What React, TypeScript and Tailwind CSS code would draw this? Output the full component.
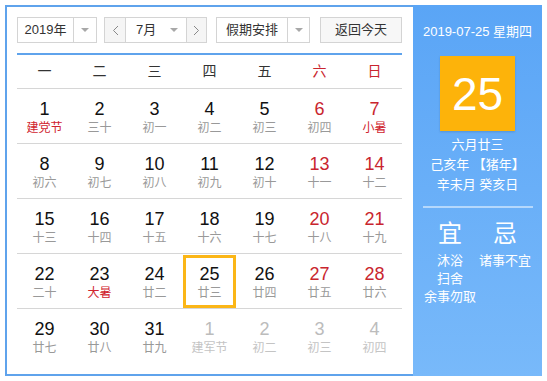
import React from "react";

type Day = { n: number; l: string; red?: boolean; lred?: boolean; other?: boolean; today?: boolean };

const rows: Day[][] = [
  [
    { n: 1, l: "建党节", lred: true },
    { n: 2, l: "三十" },
    { n: 3, l: "初一" },
    { n: 4, l: "初二" },
    { n: 5, l: "初三" },
    { n: 6, l: "初四", red: true },
    { n: 7, l: "小暑", red: true, lred: true },
  ],
  [
    { n: 8, l: "初六" },
    { n: 9, l: "初七" },
    { n: 10, l: "初八" },
    { n: 11, l: "初九" },
    { n: 12, l: "初十" },
    { n: 13, l: "十一", red: true },
    { n: 14, l: "十二", red: true },
  ],
  [
    { n: 15, l: "十三" },
    { n: 16, l: "十四" },
    { n: 17, l: "十五" },
    { n: 18, l: "十六" },
    { n: 19, l: "十七" },
    { n: 20, l: "十八", red: true },
    { n: 21, l: "十九", red: true },
  ],
  [
    { n: 22, l: "二十" },
    { n: 23, l: "大暑", lred: true },
    { n: 24, l: "廿二" },
    { n: 25, l: "廿三", today: true },
    { n: 26, l: "廿四" },
    { n: 27, l: "廿五", red: true },
    { n: 28, l: "廿六", red: true },
  ],
  [
    { n: 29, l: "廿七" },
    { n: 30, l: "廿八" },
    { n: 31, l: "廿九" },
    { n: 1, l: "建军节", other: true },
    { n: 2, l: "初二", other: true },
    { n: 3, l: "初三", other: true },
    { n: 4, l: "初四", other: true },
  ],
];

const font = { fontFamily: '"Liberation Sans", "Noto Sans CJK SC", sans-serif' };

function Arrow() {
  return <span className="block w-0 h-0 border-l-[4px] border-r-[4px] border-t-[4px] border-l-transparent border-r-transparent border-t-[#a8a8a8]" />;
}

export default function App() {
  return (
    <div className="pt-[5px] pl-[5px]" style={font}>
      <div className="flex w-[537px] h-[371px]">
        <div className="w-[408px] h-full border-l-2 border-t-2 border-b-2 border-[#5fa3ec] bg-white pl-[10px] pr-[11px] pt-[10px]">
          {/* header */}
          <div className="flex h-[26px] text-[13px] text-[#333] whitespace-nowrap">
            <div className="flex w-[80px] border border-[#d4d4d4] bg-white">
              <div className="w-[55px] flex items-center justify-center">2019年</div>
              <div className="flex-1 border-l border-[#d4d4d4] flex items-center justify-center">
                <Arrow />
              </div>
            </div>
            <div className="flex w-[103px] ml-[7px] border border-[#d4d4d4]">
              <div className="w-[21px] shrink-0 bg-[#f5f5f5] flex items-center justify-center border-r border-[#d4d4d4]">
                <svg width="7" height="11" viewBox="0 0 7 11"><path d="M6 1 L1.5 5.5 L6 10" fill="none" stroke="#888" strokeWidth="1" /></svg>
              </div>
              <div className="flex-1 min-w-0 flex items-center pl-[10px]">
                <span>7月</span>
                <span className="ml-[14px]"><Arrow /></span>
              </div>
              <div className="w-[20px] shrink-0 bg-[#f5f5f5] flex items-center justify-center border-l border-[#d4d4d4]">
                <svg width="7" height="11" viewBox="0 0 7 11"><path d="M1 1 L5.5 5.5 L1 10" fill="none" stroke="#888" strokeWidth="1" /></svg>
              </div>
            </div>
            <div className="flex w-[94px] ml-[9px] border border-[#d4d4d4]">
              <div className="w-[70px] flex items-center justify-center">假期安排</div>
              <div className="flex-1 border-l border-[#d4d4d4] flex items-center justify-center">
                <Arrow />
              </div>
            </div>
            <div className="w-[82px] ml-[10px] border border-[#d4d4d4] bg-[#f7f7f7] flex items-center justify-center">
              返回今天
            </div>
          </div>
          <div className="mt-[10px] h-[1.5px] bg-[#5fa3ec]" />
          {/* weekdays */}
          <div className="grid grid-cols-7 h-[33px] items-center text-[14px] text-[#333]">
            {["一", "二", "三", "四", "五", "六", "日"].map((w, i) => (
              <div key={w} className={"text-center " + (i >= 5 ? "text-[#c9252e]" : "")}>
                {w}
              </div>
            ))}
          </div>
          {rows.map((r, ri) => (
            <div key={ri} className="grid grid-cols-7 h-[55px] border-t border-[#d6d6d6]">
              {r.map((d, di) => (
                <div key={di} className="relative flex flex-col items-center pt-[10px]">
                  {d.today && <div className="absolute left-[1px] right-[1px] top-[1px] bottom-0 border-[3px] border-[#fbb617]" />}
                  <div
                    className={
                      "text-[18px] leading-[20px] " +
                      (d.other ? "text-[#bcbcbc]" : d.red ? "text-[#c9252e]" : "text-[#111]")
                    }
                  >
                    {d.n}
                  </div>
                  <div
                    className={
                      "mt-[1px] text-[12px] leading-[16px] " +
                      (d.other ? "text-[#c4c4c4]" : d.lred ? "text-[#d0242e]" : "text-[#999]")
                    }
                  >
                    {d.l}
                  </div>
                </div>
              ))}
            </div>
          ))}
        </div>
        {/* right panel */}
        <div className="w-[129px] h-full bg-gradient-to-b from-[#5aa5f6] to-[#78b9fa] flex flex-col items-center text-white">
          <div className="mt-[18px] text-[13px] leading-[18px]">2019-07-25 星期四</div>
          <div className="mt-[15px] w-[75px] h-[75px] bg-[#fdb30a] shadow-[0_1px_2px_rgba(0,0,0,0.15)] flex items-center justify-center text-[46px] leading-none">
            25
          </div>
          <div className="mt-[4px] text-[13px] leading-[20px] text-center">
            <div>六月廿三</div>
            <div>己亥年 【猪年】</div>
            <div>辛未月 癸亥日</div>
          </div>
          <div className="mt-[11px] w-[110px] h-[2px] bg-white/50" />
          <div className="mt-[12px] w-[110px] grid grid-cols-2">
            <div className="flex flex-col items-center">
              <div className="text-[24px] leading-[28px]">宜</div>
              <div className="mt-[4px] text-[13px] leading-[18px] text-center">
                <div>沐浴</div>
                <div>扫舍</div>
                <div className="whitespace-nowrap">余事勿取</div>
              </div>
            </div>
            <div className="flex flex-col items-center">
              <div className="text-[24px] leading-[28px]">忌</div>
              <div className="mt-[4px] text-[13px] leading-[18px] text-center whitespace-nowrap">诸事不宜</div>
            </div>
          </div>
        </div>
      </div>
    </div>
  );
}
